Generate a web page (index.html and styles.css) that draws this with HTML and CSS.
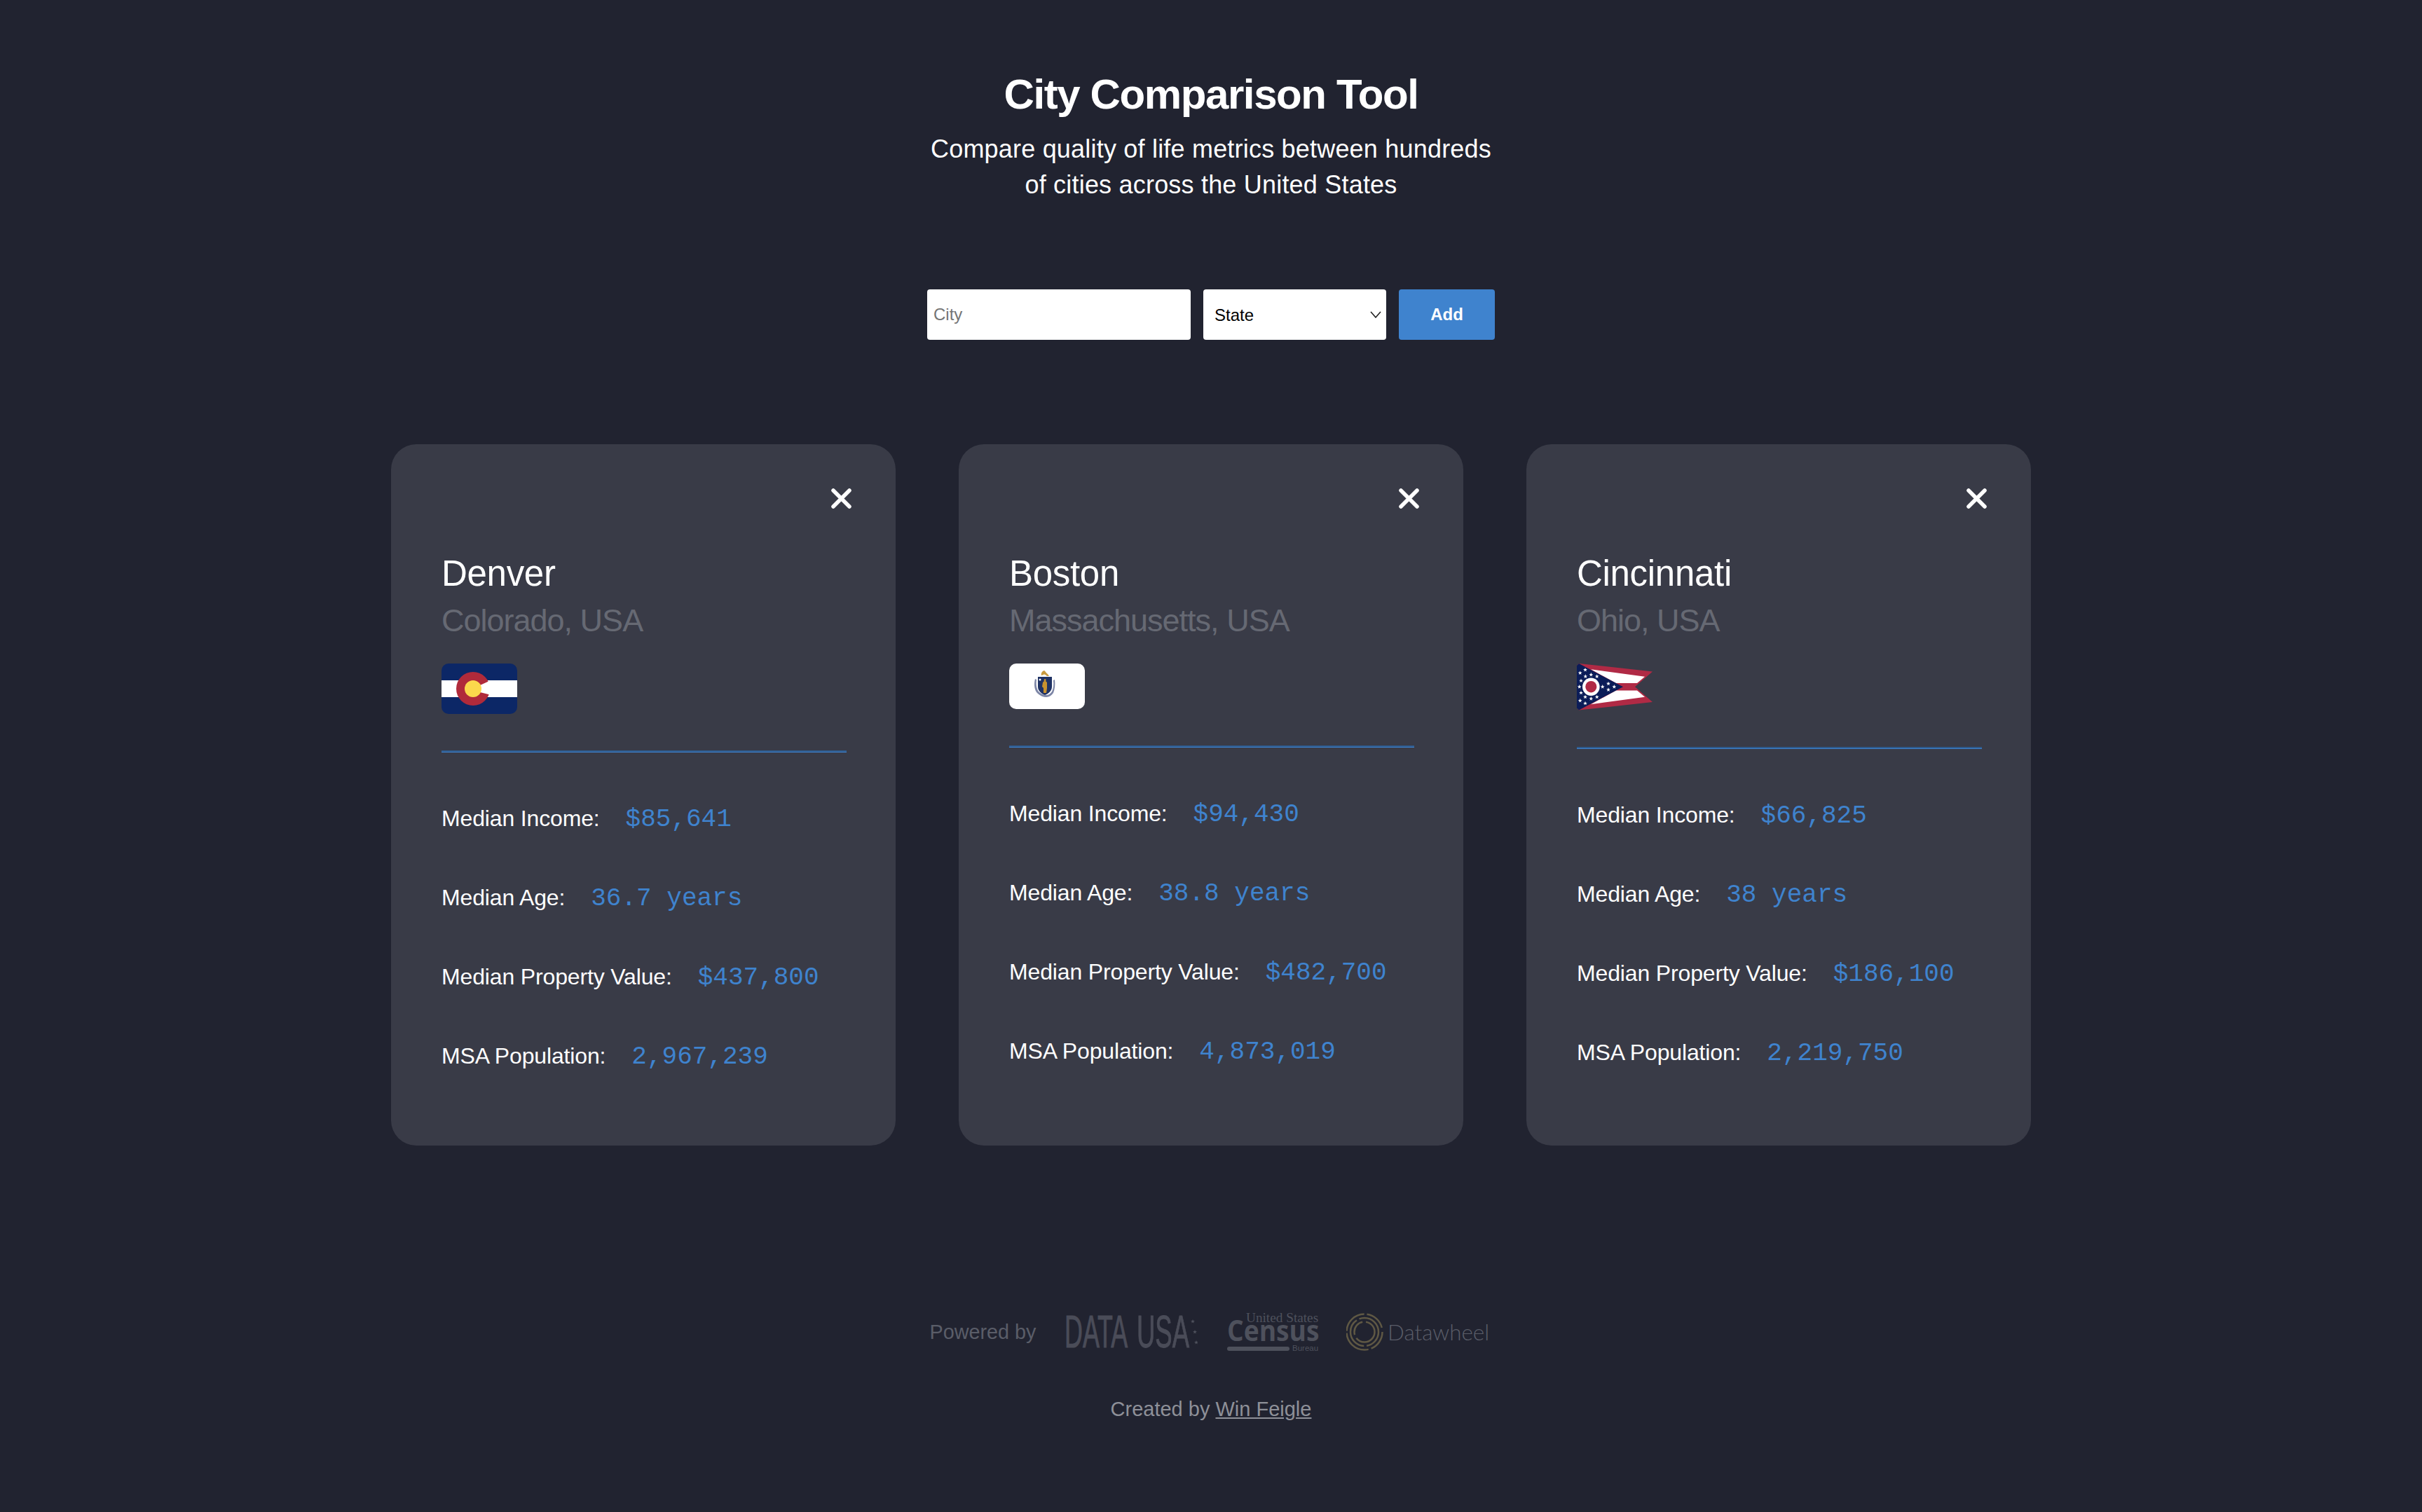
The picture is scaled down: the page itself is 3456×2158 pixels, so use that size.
FILE: index.html
```html
<!DOCTYPE html>
<html lang="en">
<head>
<meta charset="utf-8">
<title>City Comparison Tool</title>
<link rel="stylesheet" href="styles.css">
</head>
<body>
<svg class="defs" width="0" height="0" aria-hidden="true">
  <defs>
    <polygon id="star" points="0,-3 0.8,-0.9 2.9,-0.9 1.2,0.4 1.8,2.4 0,1.2 -1.8,2.4 -1.2,0.4 -2.9,-0.9 -0.8,-0.9"/>
  </defs>
</svg>
<header class="intro">
  <h1 class="intro-title">City Comparison Tool</h1>
  <p class="intro-sub">Compare quality of life metrics between hundreds of cities across the United States</p>
</header>

<form class="search">
  <input class="search-city" type="text" placeholder="City">
  <div class="search-state">
    <select class="search-select"><option>State</option></select>
    <svg class="search-chevron" width="16" height="10" viewBox="0 0 16 10"><path d="M1 1l7 8 7-8" fill="none" stroke="#222" stroke-width="1.6"/></svg>
  </div>
  <button class="search-add" type="button">Add</button>
</form>

<main class="cards">
  <article class="card">
    <svg class="card-close" width="29" height="29" viewBox="0 0 29 29"><path d="M3 3l23 23M26 3L3 26" fill="none" stroke="#fff" stroke-width="5.5" stroke-linecap="round"/></svg>
    <h2 class="card-city">Denver</h2>
    <p class="card-state">Colorado, USA</p>
    <svg class="flag flag-co" width="108" height="72" viewBox="0 0 108 72">
      <rect width="108" height="72" rx="10" fill="#0c2766"/>
      <rect y="24" width="108" height="24" fill="#fff"/>
      <circle cx="45" cy="36" r="24" fill="#b02a3a"/>
      <polygon points="55,31 67,25.5 74,25.5 74,46 67,44 55,41" fill="#fff"/>
      <circle cx="45" cy="36" r="12" fill="#fbd84c"/>
    </svg>
    <hr class="card-rule">
    <dl class="stats">
      <div class="stat"><dt>Median Income:</dt><dd>$85,641</dd></div>
      <div class="stat"><dt>Median Age:</dt><dd>36.7 years</dd></div>
      <div class="stat"><dt>Median Property Value:</dt><dd>$437,800</dd></div>
      <div class="stat"><dt>MSA Population:</dt><dd>2,967,239</dd></div>
    </dl>
  </article>

  <article class="card">
    <svg class="card-close" width="29" height="29" viewBox="0 0 29 29"><path d="M3 3l23 23M26 3L3 26" fill="none" stroke="#fff" stroke-width="5.5" stroke-linecap="round"/></svg>
    <h2 class="card-city">Boston</h2>
    <p class="card-state">Massachusetts, USA</p>
    <svg class="flag flag-ma" width="108" height="65" viewBox="0 0 108 65">
      <rect width="108" height="65" rx="10" fill="#fff"/>
      <path d="M46 17c-1-3 1-6 4-7 2 1 2 3 5 5l2 3h-3c-2-2-4-3-5-2z" fill="#c99a3f"/>
      <path d="M37 22c-2 8-1 17 4 21 3 3 8 5 12 5 4 0 8-3 10-6 2-5 3-12 2-19l-2 1c1 6 0 12-2 16-2 3-5 5-8 5-4 0-8-2-11-5-3-4-4-10-3-17z" fill="#7d86a6"/>
      <path d="M41 19h20v14c0 6-5 10-10 12-5-2-10-6-10-12z" fill="#1f3264"/>
      <path d="M51 22c2 0 2 2 1 3l2 2 0 8-1 7h-4l0-7-2-2 1-6 2-2c-1-1 0-3 1-3z" fill="#c8922f"/>
      <circle cx="44" cy="23" r="1.5" fill="#fff"/>
    </svg>
    <hr class="card-rule">
    <dl class="stats">
      <div class="stat"><dt>Median Income:</dt><dd>$94,430</dd></div>
      <div class="stat"><dt>Median Age:</dt><dd>38.8 years</dd></div>
      <div class="stat"><dt>Median Property Value:</dt><dd>$482,700</dd></div>
      <div class="stat"><dt>MSA Population:</dt><dd>4,873,019</dd></div>
    </dl>
  </article>

  <article class="card">
    <svg class="card-close" width="29" height="29" viewBox="0 0 29 29"><path d="M3 3l23 23M26 3L3 26" fill="none" stroke="#fff" stroke-width="5.5" stroke-linecap="round"/></svg>
    <h2 class="card-city">Cincinnati</h2>
    <p class="card-state">Ohio, USA</p>
    <svg class="flag flag-oh" width="108" height="67" viewBox="0 0 108 64.5" preserveAspectRatio="none">
      <polygon points="3,0 108,11 83,32 108,53 3,64 0,61 0,3" fill="#b02a45"/>
      <polygon points="20,8 97,18 86,27 56,27" fill="#fff"/>
      <polygon points="20,56 97,46 86,37 56,37" fill="#fff"/>
      <polygon points="0,3 3,0 66,32 3,64 0,61" fill="#0b1c58"/>
      <circle cx="20.3" cy="32" r="12.3" fill="#fff"/>
      <circle cx="20.3" cy="32" r="8" fill="#b02a45"/>
      <g fill="#fff">
        <use href="#star" x="4.7" y="13"/><use href="#star" x="12" y="8.7"/><use href="#star" x="12.3" y="17.7"/>
        <use href="#star" x="20.3" y="15.3"/><use href="#star" x="28.7" y="17.7"/><use href="#star" x="6" y="23.7"/>
        <use href="#star" x="3.7" y="32"/><use href="#star" x="6" y="40.3"/><use href="#star" x="4.7" y="51"/>
        <use href="#star" x="12" y="54.7"/><use href="#star" x="12" y="46"/><use href="#star" x="20.3" y="48.3"/>
        <use href="#star" x="28.7" y="46"/><use href="#star" x="36.7" y="32"/><use href="#star" x="45" y="27.7"/>
        <use href="#star" x="53.3" y="32"/><use href="#star" x="45" y="36"/>
      </g>
    </svg>
    <hr class="card-rule">
    <dl class="stats">
      <div class="stat"><dt>Median Income:</dt><dd>$66,825</dd></div>
      <div class="stat"><dt>Median Age:</dt><dd>38 years</dd></div>
      <div class="stat"><dt>Median Property Value:</dt><dd>$186,100</dd></div>
      <div class="stat"><dt>MSA Population:</dt><dd>2,219,750</dd></div>
    </dl>
  </article>
</main>

<footer class="foot">
  <div class="sources">
    <span class="sources-label">Powered by</span>
    <svg class="logo" width="192" height="90" viewBox="0 -18 192 90">
      <text class="logo-datausa" transform="translate(2 49) scale(.56 1)">DATA</text>
      <text class="logo-datausa" transform="translate(105 49) scale(.57 1)">USA</text>
      <g class="logo-stars">
        <use href="#star" x="185" y="12"/><use href="#star" x="188" y="27"/><use href="#star" x="190" y="42"/>
      </g>
    </svg>
    <svg class="logo" width="136" height="90" viewBox="0 -18 136 90">
      <text class="logo-census-small" transform="translate(31 13) scale(1.07 1)">United States</text>
      <text class="logo-census" transform="translate(4 40) scale(.885 1)">Census</text>
      <rect x="4" y="48" width="89" height="6" rx="3" class="logo-fill"/>
      <text class="logo-census-tiny" x="97" y="54">Bureau</text>
    </svg>
    <svg class="logo" width="209" height="90" viewBox="0 -18 209 90">
      <g class="logo-wheel">
        <circle cx="26" cy="27" r="25.5" stroke-dasharray="30 4 44 3 38 4 30 7"/>
        <circle cx="26" cy="27" r="20" stroke-dasharray="28 4 50 4 40 0"/>
        <circle cx="26" cy="27" r="14.5" stroke-dasharray="36 5 24 5 21 0"/>
      </g>
      <text class="logo-datawheel" transform="translate(59 39) scale(.98 1)">Datawheel</text>
    </svg>
  </div>
  <p class="credit">Created by <a class="credit-link" href="#">Win Feigle</a></p>
</footer>
</body>
</html>
```

FILE: styles.css
```css
* { box-sizing: border-box; }

html, body { margin: 0; padding: 0; }

body {
  min-height: 2158px;
  background: #212330;
  color: #fff;
  font-family: "Liberation Sans", Arial, sans-serif;
  overflow: hidden;
}

.defs { position: absolute; }

.intro {
  display: flex;
  flex-direction: column;
  align-items: center;
  padding-top: 100px;
  text-align: center;
}

.intro-title {
  margin: 0 0 18px;
  font-size: 60px;
  line-height: 69px;
  font-weight: 700;
  letter-spacing: -1.4px;
}

.intro-sub {
  margin: 0;
  width: 820px;
  font-size: 36px;
  line-height: 51px;
  letter-spacing: 0.2px;
}

.search {
  display: flex;
  justify-content: center;
  gap: 18px;
  margin-top: 124px;
}

.search-city {
  width: 376px;
  height: 72px;
  padding: 0 9px;
  border: 0;
  border-radius: 4px;
  background: #fff;
  font: 24px "Liberation Sans", Arial, sans-serif;
}

.search-city::placeholder { color: #757575; }

.search-state {
  position: relative;
  width: 261px;
  height: 72px;
}

.search-select {
  width: 100%;
  height: 100%;
  padding: 0 16px;
  border: 0;
  border-radius: 4px;
  appearance: none;
  background: #fff;
  color: #000;
  font: 24px "Liberation Sans", Arial, sans-serif;
}

.search-chevron {
  position: absolute;
  right: 7px;
  top: 31px;
}

.search-add {
  width: 137px;
  height: 72px;
  border: 0;
  border-radius: 4px;
  background: #3f83ce;
  color: #fff;
  font: 700 24px "Liberation Sans", Arial, sans-serif;
}

.cards {
  display: flex;
  justify-content: center;
  align-items: stretch;
  gap: 90px;
  margin-top: 149px;
}

.card {
  position: relative;
  width: 720px;
  padding: 155px 70px 108px 72px;
  border-radius: 36px;
  background: #393b47;
}

.card-close {
  position: absolute;
  top: 63px;
  right: 63px;
}

.card-city {
  margin: 0 0 8px;
  font-size: 51px;
  line-height: 60px;
  font-weight: 400;
  letter-spacing: -0.3px;
}

.card-state {
  margin: 0 0 32px;
  color: #666973;
  font-size: 45px;
  line-height: 58px;
  letter-spacing: -1px;
}

.flag {
  display: block;
}

.card-rule {
  height: 3px;
  margin: 52px 0 74px;
  border: 0;
  border-top: 2px solid #2f5a8c;
  border-bottom: 1px solid #3f83ce;
}

.stats {
  display: flex;
  flex-direction: column;
  gap: 73px;
  margin: 0;
}

.stat {
  display: flex;
  align-items: baseline;
  gap: 37px;
  height: 40px;
  font-size: 32px;
  line-height: 40px;
}

.stat dt {
  color: #fff;
  letter-spacing: -0.15px;
}

.stat dd {
  margin: 0;
  color: #3f83ce;
  font-family: "Liberation Mono", "Courier New", monospace;
  font-size: 36px;
}

.foot {
  display: flex;
  flex-direction: column;
  align-items: center;
  margin-top: 239px;
}

.sources {
  display: flex;
  align-items: center;
  gap: 38px;
  height: 54px;
}

.sources-label {
  color: #5a5d68;
  font-size: 28.8px;
}

.logo { display: block; }

.logo-datausa {
  fill: #4a4c58;
  stroke: #4a4c58;
  stroke-width: 1px;
  font-size: 64px;
  font-family: "Liberation Sans", Arial, sans-serif;
}

.logo-stars, .logo-fill { fill: #4e515c; }

.logo-census-small {
  fill: #4e515c;
  font-size: 18px;
  font-family: "Liberation Serif", serif;
}

.logo-census {
  fill: #4e515c;
  font-size: 42px;
  font-weight: 700;
  font-family: "Open Sans", sans-serif;
}

.logo-census-tiny {
  fill: #4e515c;
  font-size: 11.5px;
  font-family: "Liberation Sans", sans-serif;
}

.logo-wheel {
  fill: none;
  stroke: #5f5844;
  stroke-width: 2.5;
}

.logo-datawheel {
  fill: #5a5d68;
  font-size: 32px;
  font-family: "Lato", sans-serif;
  font-weight: 300;
}

.credit {
  margin: 65px 0 0;
  color: #8e9098;
  font-size: 29px;
  line-height: 36px;
}

.credit-link { color: inherit; }
```
